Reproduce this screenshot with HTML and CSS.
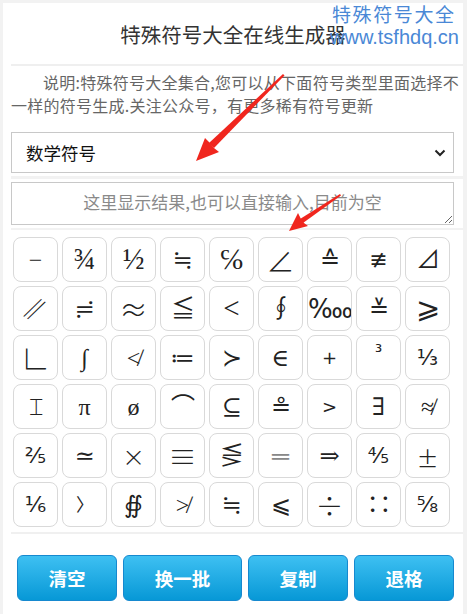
FILE: index.html
```html
<!DOCTYPE html>
<html lang="zh-CN">
<head>
    <meta charset="UTF-8">
    <meta name="viewport" content="width=device-width, initial-scale=1.0">
    <title>特殊符号大全在线生成器</title>
    <link rel="stylesheet" href="styles.css">
</head>
<body>
    <div class="panel">
        <!-- Header -->
        <div class="header">
            <h1>特殊符号大全在线生成器</h1>
        </div>

        <p class="intro">说明:特殊符号大全集合,您可以从下面符号类型里面选择不一样的符号生成.关注公众号，有更多稀有符号更新</p>

        <!-- Type select -->
        <div class="select-wrap">
            <select class="type-select">
                <option>数学符号</option>
                <option>特殊符号</option>
                <option>箭头符号</option>
            </select>
            <svg class="chevron" width="12" height="8" viewBox="0 0 12 8">
                <path d="M1.5 1.5 L6 6 L10.5 1.5" fill="none" stroke="#222" stroke-width="2"/>
            </svg>
        </div>

        <div class="result-wrap">
            <textarea class="result" placeholder="这里显示结果,也可以直接输入,目前为空"></textarea>
        </div>

        <!-- Symbol grid -->
        <div class="symbols">
            <button class="sym">−</button>
            <button class="sym lg">¾</button>
            <button class="sym lg">½</button>
            <button class="sym">≒</button>
            <button class="sym lg">℅</button>
            <button class="sym cjk">∠</button>
            <button class="sym">≙</button>
            <button class="sym sans">≢</button>
            <button class="sym">⊿</button>

            <button class="sym"><span class="slant">∥</span></button>
            <button class="sym">≓</button>
            <button class="sym cjk">≈</button>
            <button class="sym">≦</button>
            <button class="sym lg">&lt;</button>
            <button class="sym">∮</button>
            <button class="sym sans big">‱</button>
            <button class="sym">≚</button>
            <button class="sym lg">⩾</button>

            <button class="sym cjk">∟</button>
            <button class="sym">∫</button>
            <button class="sym">≮</button>
            <button class="sym">≔</button>
            <button class="sym">≻</button>
            <button class="sym">∈</button>
            <button class="sym small">+</button>
            <button class="sym sup">³</button>
            <button class="sym sans">⅓</button>

            <button class="sym">⌶</button>
            <button class="sym">π</button>
            <button class="sym">ø</button>
            <button class="sym">⌒</button>
            <button class="sym">⊆</button>
            <button class="sym">≗</button>
            <button class="sym small">&gt;</button>
            <button class="sym">∃</button>
            <button class="sym">≉</button>

            <button class="sym sans">⅖</button>
            <button class="sym">≃</button>
            <button class="sym xl">×</button>
            <button class="sym cjk">≡</button>
            <button class="sym">⋚</button>
            <button class="sym gray">═</button>
            <button class="sym">⇒</button>
            <button class="sym sans">⅘</button>
            <button class="sym xl">±</button>

            <button class="sym sans">⅙</button>
            <button class="sym thin">〉</button>
            <button class="sym">∯</button>
            <button class="sym">≯</button>
            <button class="sym">≒</button>
            <button class="sym">⩽</button>
            <button class="sym cjk">÷</button>
            <button class="sym">∷</button>
            <button class="sym sans">⅝</button>
        </div>

        <!-- Actions -->
        <div class="actions">
            <button class="action">清空</button>
            <button class="action wide">换一批</button>
            <button class="action">复制</button>
            <button class="action">退格</button>
        </div>
    </div>

    <!-- Site watermark -->
    <div class="watermark">
        <div class="wm-name">特殊符号大全</div>
        <div class="wm-url">www.tsfhdq.cn</div>
    </div>

    <!-- Red annotation arrows -->
    <svg class="arrows" width="467" height="614" viewBox="0 0 467 614">
        <polygon points="283,74 284.5,75.5 214,148 209,143" fill="#f0261e"/>
        <polygon points="196,161 205,138 210,143 214,148 219,152" fill="#f0261e"/>
        <polygon points="340,194 341,195.5 303,223 300,219" fill="#f0261e"/>
        <polygon points="289,231 298,213 301,219 304,223 308,226" fill="#f0261e"/>
    </svg>
</body>
</html>
```

FILE: styles.css
```css
body {
    margin: 0;
    padding: 3px 4px 0 3px;
    background-color: #f2f2f2;
    font-family: "Noto Sans CJK SC", "Noto Sans", sans-serif;
}

.panel {
    background-color: #fff;
    padding: 0 0 12px 8px;
    height: 611px;
    box-sizing: border-box;
}

.header {
    height: 61px;
    border-bottom: 2px solid #efefef;
    display: flex;
    align-items: center;
    justify-content: center;
    padding-right: 8px;
}

.header h1 {
    margin: 0;
    font-size: 20.5px;
    font-weight: normal;
    color: #333;
}

.intro {
    margin: 5px 4px 0 0;
    font-size: 16px;
    line-height: 23px;
    color: #666;
    text-indent: 2em;
    text-align: justify;
    letter-spacing: 0.25px;
}

.select-wrap {
    position: relative;
    margin-top: 15px;
    width: 443px;
}

.type-select {
    display: block;
    width: 443px;
    height: 41px;
    border: 1px solid #c8c8c8;
    background-color: #fff;
    padding: 0 14px;
    font-family: "Noto Sans CJK SC", sans-serif;
    font-size: 17.5px;
    color: #111;
    appearance: none;
    border-radius: 0;
}

.chevron {
    position: absolute;
    right: 8px;
    top: 17px;
}

.result-wrap {
    margin-top: 3px;
    padding-top: 3px;
    border-top: 3px solid #f2f2f2;
}

.result {
    display: block;
    width: 443px;
    height: 43px;
    box-sizing: border-box;
    border: 1px solid #c8c8c8;
    padding: 6px 10px;
    font-family: "Noto Sans CJK SC", sans-serif;
    font-size: 17px;
    text-align: center;
    resize: vertical;
}

.result::placeholder {
    color: #8a8a8a;
}

.symbols {
    margin-top: 3px;
    padding: 7px 0 5px 2px;
    border-top: 2px solid #f2f2f2;
    display: grid;
    grid-template-columns: repeat(9, 45px);
    grid-auto-rows: 45px;
    gap: 4px;
}

.sym {
    padding: 0;
    border: 1px solid #d9d9d9;
    border-radius: 8px;
    background-color: #fff;
    font-family: "Liberation Serif", "DejaVu Serif", serif;
    font-size: 24px;
    color: #222;
    line-height: 1;
    overflow: hidden;
}

.sym.lg {
    font-size: 29px;
}

.sym.xl {
    font-family: Lato, "DejaVu Sans", sans-serif;
    font-size: 34px;
    font-weight: 300;
}

.sym.cjk {
    font-family: "Noto Sans CJK SC", sans-serif;
    font-size: 28px;
    font-weight: 300;
}

.slant {
    display: inline-block;
    font-family: "Noto Sans CJK SC", sans-serif;
    font-size: 26px;
    font-weight: 300;
    transform: skewX(-28deg);
}

.sym.thin {
    font-family: "DejaVu Sans", sans-serif;
    font-size: 18px;
    font-weight: 300;
}

.sym.sans {
    font-family: "DejaVu Sans", "Noto Sans", sans-serif;
    font-size: 22px;
}

.sym.big {
    font-size: 26px;
}

.sym.small {
    font-family: "DejaVu Sans", sans-serif;
    font-size: 18px;
}

.sym.sup {
    font-family: "DejaVu Sans", sans-serif;
    font-size: 18px;
    padding-bottom: 12px;
}

.sym.gray {
    color: #888;
}

.actions {
    border-top: 2px solid #f0f0f0;
    padding: 21px 0 0 6px;
    display: flex;
    gap: 6px;
}

.action {
    width: 100px;
    height: 46px;
    border: 1px solid #1689cf;
    border-radius: 6px;
    background: linear-gradient(#3ec0f2, #0798d6);
    color: #fff;
    font-family: "Noto Sans CJK SC", sans-serif;
    font-size: 18.5px;
    font-weight: bold;
    cursor: pointer;
}

.action.wide {
    width: 119px;
}

.watermark {
    position: absolute;
    left: 330px;
    top: 2px;
    color: #4a88d6;
    pointer-events: none;
}

.wm-name {
    font-family: "Noto Sans CJK SC", sans-serif;
    font-size: 19px;
    line-height: 24px;
    letter-spacing: 1.6px;
    padding-left: 2px;
}

.wm-url {
    font-family: "Liberation Sans", Arial, sans-serif;
    font-size: 20px;
    line-height: 22px;
}

.arrows {
    position: absolute;
    left: 0;
    top: 0;
    pointer-events: none;
}
```
